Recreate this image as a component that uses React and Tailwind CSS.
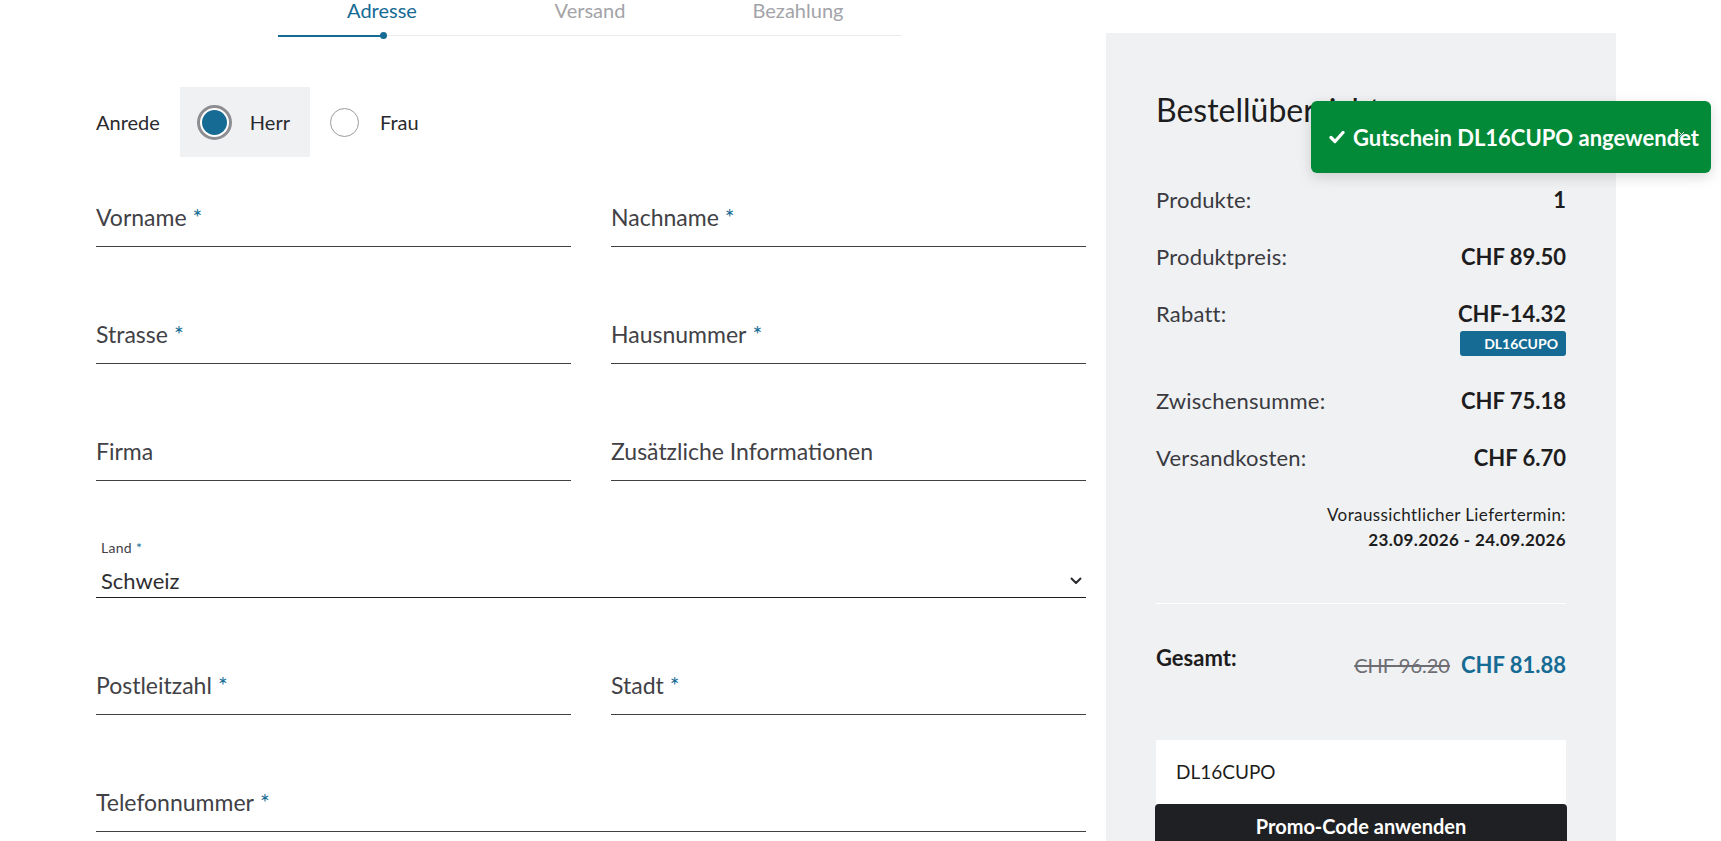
import React, { useState } from 'react';

const BLUE = 'text-[#156b94]';

const steps = ['Adresse', 'Versand', 'Bezahlung'];

const Stepper = () => (
  <div className="ml-[182px] w-[624px]">
    <div className="grid grid-cols-3 pt-[1px]">
      {steps.map((s, i) => (
        <div
          key={s}
          className={`text-center text-[20px] leading-[18px] ${i === 0 ? BLUE : 'text-[#a3a3a8]'}`}
        >
          {s}
        </div>
      ))}
    </div>
    <div className="relative mt-[13px] h-[7px]">
      <div className="absolute left-0 right-0 top-[3px] h-px bg-[#ececee]" />
      <div className="absolute left-0 top-[2.5px] h-[2px] w-[106px] bg-[#156b94]" />
      <div className="absolute left-[102px] top-0 h-[7px] w-[7px] rounded-full bg-[#156b94]" />
    </div>
  </div>
);

const Radio = ({ checked }) =>
  checked ? (
    <span className="flex h-[29px] w-[29px] items-center justify-center rounded-full bg-white outline outline-[3px] outline-[#8d8d92]">
      <span className="h-[25px] w-[25px] rounded-full bg-[#156b94]" />
    </span>
  ) : (
    <span className="h-[29px] w-[29px] rounded-full border border-[#9c9ca1] bg-white" />
  );

const Anrede = () => {
  const [value, setValue] = useState('herr');
  return (
    <div className="mt-[48px] flex items-center">
      <span className="text-[20px] text-[#2a2a2e]">Anrede</span>
      <div className="ml-[20px] flex">
        {[
          ['herr', 'Herr'],
          ['frau', 'Frau'],
        ].map(([key, label]) => (
          <button
            key={key}
            onClick={() => setValue(key)}
            className={`flex h-[70px] items-center gap-[21px] px-5 ${value === key ? 'bg-[#f0f1f3]' : ''}`}
          >
            <Radio checked={value === key} />
            <span className="text-[20px] text-[#2a2a2e]">{label}</span>
          </button>
        ))}
      </div>
    </div>
  );
};

const Field = ({ label, required, wide }) => (
  <div
    className={`flex h-[59px] items-center border-b border-[#3f3f44] ${wide ? 'col-span-2' : ''}`}
  >
    <span className="text-[23px] text-[#414146]">
      {label}
      {required && <span className={`ml-[6px] ${BLUE}`}>*</span>}
    </span>
  </div>
);

const LandSelect = () => (
  <div className="col-span-2 flex h-[59px] flex-col border-b border-[#1f1f22] pb-[2px]">
    <span className="mt-[1px] pl-[5px] text-[14px] leading-[16px] tracking-[0.3px] text-[#414146]">
      Land <span className={BLUE}>*</span>
    </span>
    <div className="mt-[11px] flex items-center justify-between pl-[5px] pr-[4px]">
      <span className="text-[22px] leading-[28px] text-[#2f2f33]">Schweiz</span>
      <svg width="12" height="8" viewBox="0 0 12 8" fill="none">
        <path d="M1.5 1.5L6 6l4.5-4.5" stroke="#2a2a2e" strokeWidth="2" strokeLinecap="round" strokeLinejoin="round" />
      </svg>
    </div>
  </div>
);

const AddressForm = () => (
  <div className="w-[990px] shrink-0">
    <Stepper />
    <Anrede />
    <div className="mt-[31px] grid grid-cols-2 gap-x-[40px] gap-y-[58px]">
      <Field label="Vorname" required />
      <Field label="Nachname" required />
      <Field label="Strasse" required />
      <Field label="Hausnummer" required />
      <Field label="Firma" />
      <Field label="Zusätzliche Informationen" />
      <LandSelect />
      <Field label="Postleitzahl" required />
      <Field label="Stadt" required />
      <Field label="Telefonnummer" required wide />
    </div>
  </div>
);

const Row = ({ label, value, children }) => (
  <div className="flex justify-between text-[22px] leading-[28px]">
    <span className="tracking-[0.2px] text-[#3a3a3f]">{label}</span>
    <div className="flex flex-col items-end">
      <span className="font-bold text-[#1d1d20]">{value}</span>
      {children}
    </div>
  </div>
);

const Summary = () => (
  <div className="ml-[20px] mt-[33px] h-[820px] w-[510px] shrink-0 bg-[#f0f1f3] px-[50px] pt-[57px]">
    <h2 className="text-[32px] leading-[40px] text-[#1d1d20]">Bestellübersicht</h2>
    <div className="mt-[56px] flex flex-col gap-[29px]">
      <Row label="Produkte:" value="1" />
      <Row label="Produktpreis:" value="CHF 89.50" />
      <Row label="Rabatt:" value="CHF-14.32">
        <span className="mb-[2px] mt-[3px] flex h-[25px] items-center rounded-[3px] bg-[#156b94] pl-6 pr-2 text-[14px] font-bold text-white">
          DL16CUPO
        </span>
      </Row>
      <Row label="Zwischensumme:" value="CHF 75.18" />
      <Row label="Versandkosten:" value="CHF 6.70" />
    </div>
    <div className="mt-[30px] text-right text-[17px] leading-[25px] tracking-[0.4px] text-[#1d1d20]">
      <div>Voraussichtlicher Liefertermin:</div>
      <div className="font-bold">23.09.2026 - 24.09.2026</div>
    </div>
    <div className="mt-[51px] h-px bg-white" />
    <div className="mt-[40px] flex items-start justify-between">
      <span className="text-[22px] font-bold leading-[28px] text-[#1d1d20]">Gesamt:</span>
      <div className="mt-[4px] flex items-baseline gap-[11px]">
        <span className="text-[20px] text-[#6d6d72] line-through">CHF 96.20</span>
        <span className={`text-[22px] font-bold ${BLUE}`}>CHF 81.88</span>
      </div>
    </div>
    <div className="mt-[59px] flex h-[64px] items-center bg-white px-5 text-[19px] text-[#1d1d20]">
      DL16CUPO
    </div>
    <button className="-mx-px flex h-[44px] w-[calc(100%+2px)] items-center justify-center rounded-[4px] bg-[#1f2023] text-[20px] font-bold text-white">
      Promo-Code anwenden
    </button>
  </div>
);

const Toast = () => (
  <div className="absolute right-[10px] top-[101px] flex h-[72px] w-[400px] items-center rounded-[6px] bg-[#038a38] pl-[18px] shadow-[0_4px_14px_rgba(0,0,0,0.15)]">
    <svg width="16" height="14" viewBox="0 0 16 14" fill="none">
      <path d="M2 7.5l4 4L14 2.5" stroke="white" strokeWidth="3.2" strokeLinecap="round" strokeLinejoin="round" />
    </svg>
    <span className="ml-[8px] whitespace-nowrap text-[22px] font-bold text-white">Gutschein DL16CUPO angewendet</span>
    <svg className="absolute left-[367px] top-[30px]" width="7" height="7" viewBox="0 0 7 7" fill="none">
      <path d="M1 1l5 5M6 1L1 6" stroke="#d9d9d9" strokeWidth="1" />
    </svg>
  </div>
);

export default function App() {
  return (
    <div className="relative h-[841px] overflow-hidden bg-white font-[Lato,sans-serif]">
      <div className="flex pl-[96px]">
        <AddressForm />
        <Summary />
      </div>
      <Toast />
    </div>
  );
}
